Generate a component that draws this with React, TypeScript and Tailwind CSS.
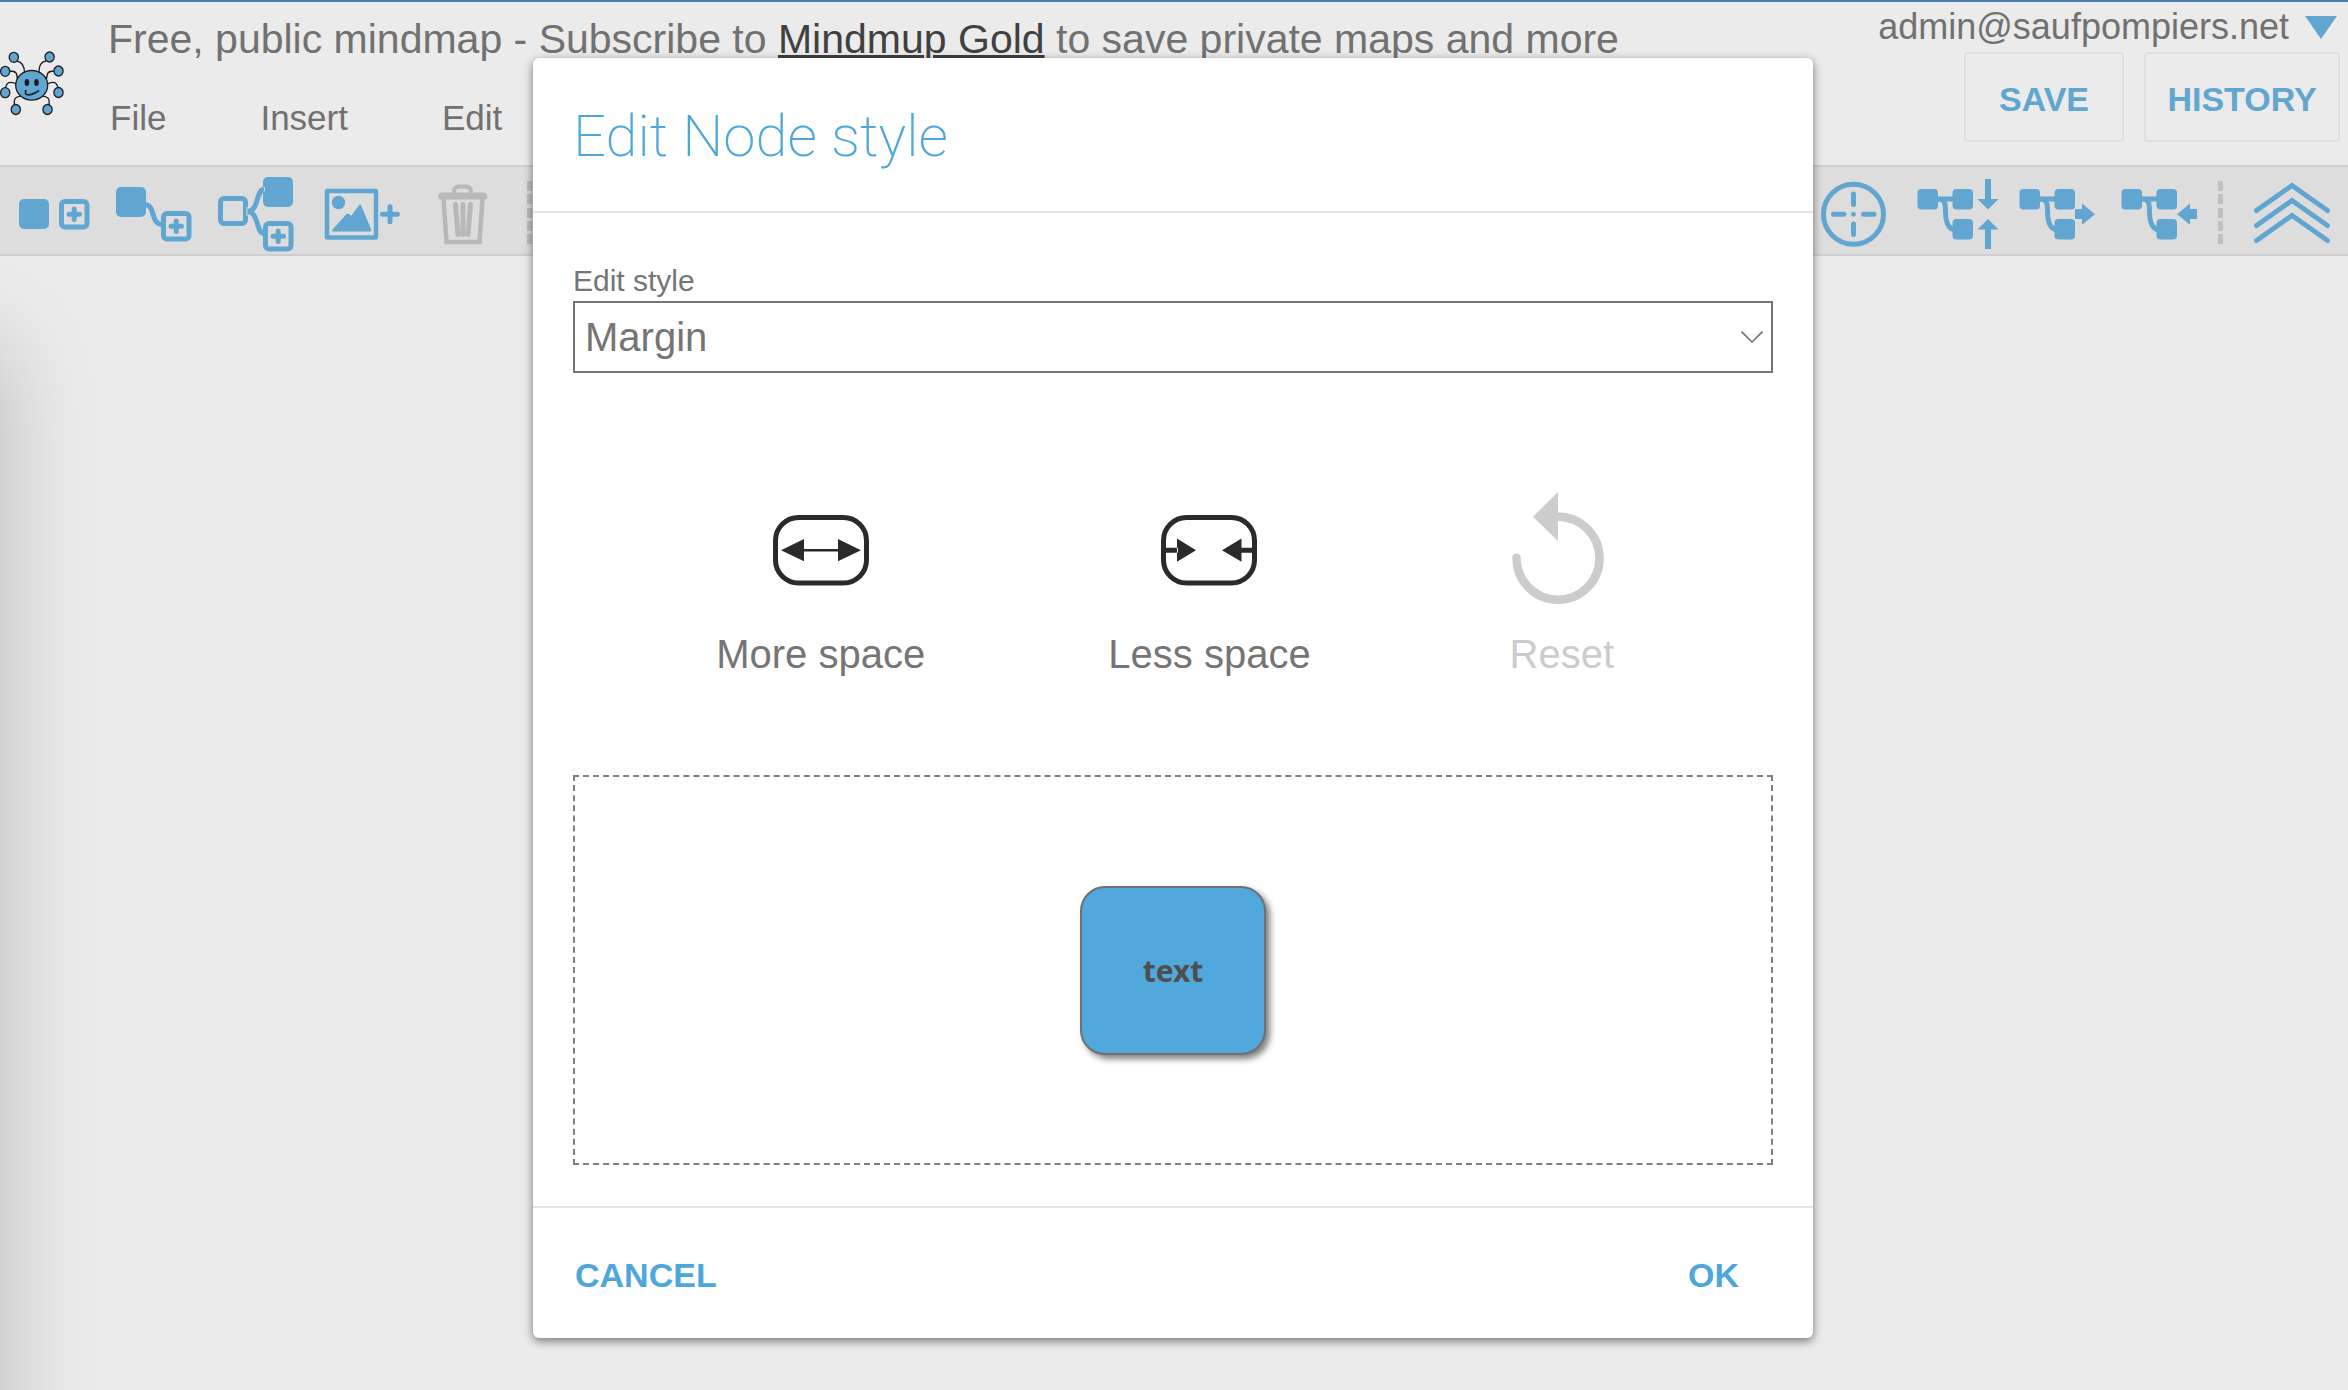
import { useState } from "react";
import type { ReactNode } from "react";

const BLUE = "#61a6d0";

function ToolButton({ label, disabled, children }: { label: string; disabled?: boolean; children: ReactNode }) {
  return (
    <button type="button" aria-label={label} disabled={disabled} className="shrink-0">
      <svg width="102" height="87" viewBox="0 0 102 87" fill="none" className="block">
        {children}
      </svg>
    </button>
  );
}

function Separator() {
  return (
    <svg width="31" height="87" viewBox="0 0 31 87" className="block shrink-0" aria-hidden="true">
      {[14, 27, 41, 54, 67].map((y) => (
        <rect key={y} x="8" y={y} width="5" height="10" fill="#bfbfbf" />
      ))}
    </svg>
  );
}

/* Outlined node with a plus sign inside, 30x30 */
function PlusNode({ x, y }: { x: number; y: number }) {
  return (
    <g transform={`translate(${x} ${y})`} stroke={BLUE} strokeWidth="5">
      <rect x="2.5" y="2.5" width="25.5" height="25.5" rx="3.5" />
      <path d="M10 15.2h10.5M15.2 10v10.5" strokeLinecap="round" />
    </g>
  );
}

/* Small parent / two children tree used by the layout tools */
function Tree() {
  return (
    <>
      <path d="M33 32h17" stroke={BLUE} strokeWidth="5" />
      <path d="M33 32c7 0 8.5 2 8.5 12 0 11 2 18 9.5 19" stroke={BLUE} strokeWidth="5" />
      <rect x="13.5" y="22" width="20.5" height="20.5" rx="4" fill={BLUE} />
      <rect x="48.5" y="22" width="20.5" height="20.5" rx="4" fill={BLUE} />
      <rect x="48.5" y="52" width="20.5" height="20.5" rx="4" fill={BLUE} />
    </>
  );
}

function Logo() {
  const dots = [
    [13.8, 7.3], [49.6, 7], [5.2, 21.3], [58.5, 21], [5.2, 42.7], [58.5, 42.5], [15.8, 59.5], [47.5, 59.5],
  ];
  return (
    <svg width="64" height="67" viewBox="0 0 64 67" fill="none" className="block shrink-0" aria-label="MindMup">
      <g stroke="#1e1e1e" strokeWidth="1.3">
        <path d="M17 11c5 1 7.500 4 7.500 12M46 11c-5 1-7 4-7 12" />
        <path d="M10 21c6 0 7 2 7.500 8M54 21c-6 0-7 2-7.500 8" />
        <path d="M5.500 38c1-6 5-7 11-4M58 38c-1-6-5-7-11-4" />
        <path d="M14.500 55c-1-8 2-8 7-9M49 55c1-8-2-8-7-9" />
        <ellipse cx="31.7" cy="35.3" rx="16" ry="14.8" fill={BLUE} />
        {dots.map(([cx, cy]) => (
          <ellipse key={`${cx}-${cy}`} cx={cx} cy={cy} rx="4.600" ry="5" fill={BLUE} />
        ))}
        <path d="M25.600 40v4c3 2.500 8 0 13.500-3.500" strokeWidth="1.600" />
      </g>
      <ellipse cx="26.9" cy="32.5" rx="2.300" ry="3.500" fill="#1e1e1e" />
      <ellipse cx="36.5" cy="32.5" rx="2.300" ry="3.500" fill="#1e1e1e" />
    </svg>
  );
}

function Header() {
  return (
    <header className="flex h-[165px] justify-between border-t-2 border-[#4f7bb0] pr-2 text-[#717171]">
      <div className="flex whitespace-nowrap">
        <div className="w-27 shrink-0 pt-12">
          <Logo />
        </div>
        <div className="pt-[13px]">
          <p className="text-[41px] leading-12">
            Free, public mindmap - Subscribe to{" "}
            <a href="#gold" className="text-[#404040] underline decoration-3">
              Mindmup Gold
            </a>{" "}
            to save private maps and more
          </p>
          <nav className="mt-[35px] flex gap-[94px] pl-0.5 text-[35px] leading-10">
            <button type="button">File</button>
            <button type="button">Insert</button>
            <button type="button">Edit</button>
          </nav>
        </div>
      </div>
      <div className="flex shrink-0 flex-col items-end gap-[5px] pt-[5px]">
        <button type="button" className="flex items-center gap-4 pr-[3px] text-[36px] leading-10">
          admin@saufpompiers.net
          <svg width="32" height="23" viewBox="0 0 32 23" aria-hidden="true">
            <path d="M0 0h32L16 23z" fill={BLUE} />
          </svg>
        </button>
        <div className="flex gap-5 text-[34px] font-bold text-[#61a6d0]">
          <button type="button" className="h-[90px] w-40 rounded border-2 border-[#dedede] pt-1">
            SAVE
          </button>
          <button type="button" className="h-[90px] w-[196px] rounded border-2 border-[#dedede] pt-1">
            HISTORY
          </button>
        </div>
      </div>
    </header>
  );
}

function Toolbar() {
  return (
    <div className="flex justify-between border-y-2 border-[#cfcfcf] bg-[#dddddd] pr-[5px] pl-1">
      <div className="flex">
        <ToolButton label="Add sibling">
          <rect x="15" y="32" width="30" height="30" rx="5" fill={BLUE} />
          <PlusNode x={55} y={32} />
        </ToolButton>
        <ToolButton label="Add child">
          <path d="M38 37.5c13 0 5 20 19 20" stroke={BLUE} strokeWidth="5" />
          <rect x="10" y="20" width="30" height="30" rx="5" fill={BLUE} />
          <PlusNode x={55} y={44} />
        </ToolButton>
        <ToolButton label="Insert parent">
          <path d="M40 44.500c12-2 7-22 17-22.500M40 44.500c12 2 7 22 17 22.500" stroke={BLUE} strokeWidth="5" />
          <rect x="12.5" y="31.5" width="25" height="25" rx="3.5" stroke={BLUE} strokeWidth="5" />
          <rect x="55" y="10" width="30" height="30" rx="5" fill={BLUE} />
          <path d="M55.500 20.500h1v3.500h-1M39 40v9" stroke="#dddddd" />
          <PlusNode x={55} y={54} />
        </ToolButton>
        <ToolButton label="Add image">
          <rect x="17" y="24" width="49" height="46.5" rx="0.5" stroke={BLUE} strokeWidth="4.5" />
          <circle cx="28.5" cy="35.5" r="6.7" fill={BLUE} />
          <path d="M23 63.500l14.500-16 4 2.500 8.500-11.500L60.500 63.500z" fill={BLUE} stroke={BLUE} strokeWidth="2" strokeLinejoin="round" />
          <path d="M72.500 47.200h15M80 39.700v15" stroke={BLUE} strokeWidth="5" strokeLinecap="round" />
        </ToolButton>
        <ToolButton label="Delete" disabled>
          <g stroke="#b8b8b8" strokeLinecap="round" strokeLinejoin="round">
            <path d="M42 25c0-4 2-5.500 5-5.500h7c3 0 5 1.500 5 5.500" strokeWidth="4" />
            <path d="M30 28.500h41.500M29 29.500h43.500" strokeWidth="6" />
            <path d="M31.500 32l3 43h33l3-43" strokeWidth="4.5" strokeLinejoin="miter" />
            <path d="M43.500 37.500l2.500 30M51 37.500v30M58.500 37.500L56 67.500" strokeWidth="5" />
          </g>
        </ToolButton>
        <div className="pl-[5px]">
          <Separator />
        </div>
      </div>
      <div className="flex">
        <ToolButton label="Center on node">
          <circle cx="51.5" cy="47.3" r="30" stroke={BLUE} strokeWidth="5" />
          <path d="M51.500 27v10.500M51.500 57v10.500M31.500 47.300H42M61.500 47.300H72" stroke={BLUE} strokeWidth="5" strokeLinecap="round" />
          <circle cx="51.5" cy="47.3" r="2.4" fill={BLUE} />
        </ToolButton>
        <ToolButton label="Collapse">
          <Tree />
          <path d="M81 12v20h-7.500L84 42.500 94.500 32H87V12zM81 82V62.500h-7.500L84 52l10.500 10.500H87V82z" fill={BLUE} />
        </ToolButton>
        <ToolButton label="Move right">
          <Tree />
          <path d="M69 42h7v-5.500L89 47.200 76 57.700V52h-7z" fill={BLUE} />
        </ToolButton>
        <ToolButton label="Move left">
          <Tree />
          <path d="M89 42h-7v-5.500L69 47.200l13 10.500V52h7z" fill={BLUE} />
        </ToolButton>
        <Separator />
        <ToolButton label="Hide toolbar">
          <path
            d="M15.500 43.500L51 18.500l35.500 25M15.500 58.500L51 33.500l35.500 25M15.500 73.500L51 48.500l35.500 25"
            stroke={BLUE}
            strokeWidth="5"
            strokeLinecap="round"
          />
        </ToolButton>
      </div>
    </div>
  );
}

function SpaceIcon({ children }: { children: ReactNode }) {
  return (
    <svg width="96" height="112" viewBox="0 0 96 112" className="block" aria-hidden="true">
      <rect x="2.5" y="25.5" width="91" height="65.5" rx="23" fill="none" stroke="#2a2a2a" strokeWidth="5" />
      <g fill="#2a2a2a">{children}</g>
    </svg>
  );
}

function StyleAction({ label, disabled, icon }: { label: string; disabled?: boolean; icon: ReactNode }) {
  return (
    <button
      type="button"
      disabled={disabled}
      className="mx-10 flex min-w-[136px] flex-col items-center gap-[26px] text-[40px] leading-12 disabled:text-[#cccccc]"
    >
      {icon}
      {label}
    </button>
  );
}

function EditStyleDialog() {
  const [style, setStyle] = useState("margin");

  return (
    <section
      role="dialog"
      aria-labelledby="dialog-title"
      className="w-full max-w-[1280px] rounded-md bg-white text-[#757575] shadow-[0_3px_10px_rgba(0,0,0,0.5)]"
    >
      <h2
        id="dialog-title"
        className="border-b-2 border-[#e5e5e5] px-10 pt-[42px] pb-[39px] font-['Roboto',sans-serif] text-[58px] leading-[72px] font-extralight text-[#4ea7db]"
      >
        Edit Node style
      </h2>

      <div className="px-10 pt-[50px] pb-[41px]">
        <label htmlFor="style" className="block text-[30px] leading-9">
          Edit style
        </label>
        <div className="relative mt-0.5">
          <select
            id="style"
            value={style}
            onChange={(e) => setStyle(e.target.value)}
            className="block h-[72px] w-full appearance-none border-2 border-[#757575] bg-white px-2.5 text-[40px]"
          >
            <option value="margin">Margin</option>
            <option value="width">Width</option>
            <option value="font">Font</option>
          </select>
          <svg
            width="22"
            height="12"
            viewBox="0 0 22 12"
            fill="none"
            className="pointer-events-none absolute top-[30px] right-2.5"
            aria-hidden="true"
          >
            <path d="M0.500 0.500L11 11 21.500 0.500" stroke="#757575" strokeWidth="1.6" />
          </svg>
        </div>

        {/* Actions */}
        <div className="mt-[119px] flex justify-evenly">
          <StyleAction
            label="More space"
            icon={
              <SpaceIcon>
                <path d="M8 58.200L31 47v22.300zM88 58.200L65 47v22.300zM31 57h34v2.600H31z" />
              </SpaceIcon>
            }
          />
          <StyleAction
            label="Less space"
            icon={
              <SpaceIcon>
                <path d="M35 58.200L16 46.500v23.300zM61 58.200l19.500-11.700v23.300zM4 55.700h13v5H4zM79 55.700h13v5H79z" />
              </SpaceIcon>
            }
          />
          <StyleAction
            label="Reset"
            disabled
            icon={
              <svg width="100" height="112" viewBox="0 0 100 112" fill="none" className="block" aria-hidden="true">
                <path d="M46 24.700a41.500 41.500 0 1 1-41.500 41" stroke="#cccccc" strokeWidth="8.6" strokeLinecap="round" />
                <path d="M21 24.700L46 0v49z" fill="#cccccc" />
              </svg>
            }
          />
        </div>

        {/* Preview */}
        <div className="mt-[97px] flex h-[390px] items-center justify-center border-2 border-dashed border-[#808080]">
          <div className="rounded-[25px] border-2 border-[#707070] bg-[#50a8dc] px-[61px] py-[62px] font-['Noto_Sans',sans-serif] text-[30px] leading-[41px] font-bold text-[#4f4f4f] shadow-[4px_4px_6px_rgba(0,0,0,0.5)]">
            text
          </div>
        </div>
      </div>

      <div className="flex justify-between border-t-2 border-[#e5e5e5] pt-[47px] pr-[74px] pb-[43px] pl-[42px] text-[34px] leading-10 font-bold text-[#4ea7db]">
        <button type="button">CANCEL</button>
        <button type="button">OK</button>
      </div>
    </section>
  );
}

export default function App() {
  return (
    <div className="relative min-h-screen overflow-hidden bg-[#ebebeb] font-['Liberation_Sans',Arial,sans-serif]">
      <Header />
      <Toolbar />

      {/* Side panel kept off screen, only its shadow shows */}
      <div className="absolute top-[350px] right-full -bottom-40 w-80 shadow-[0_0_90px_rgba(0,0,0,0.22)]" />

      <div className="absolute inset-0 flex items-start justify-center pt-[58px] pr-0.5">
        <EditStyleDialog />
      </div>
    </div>
  );
}
